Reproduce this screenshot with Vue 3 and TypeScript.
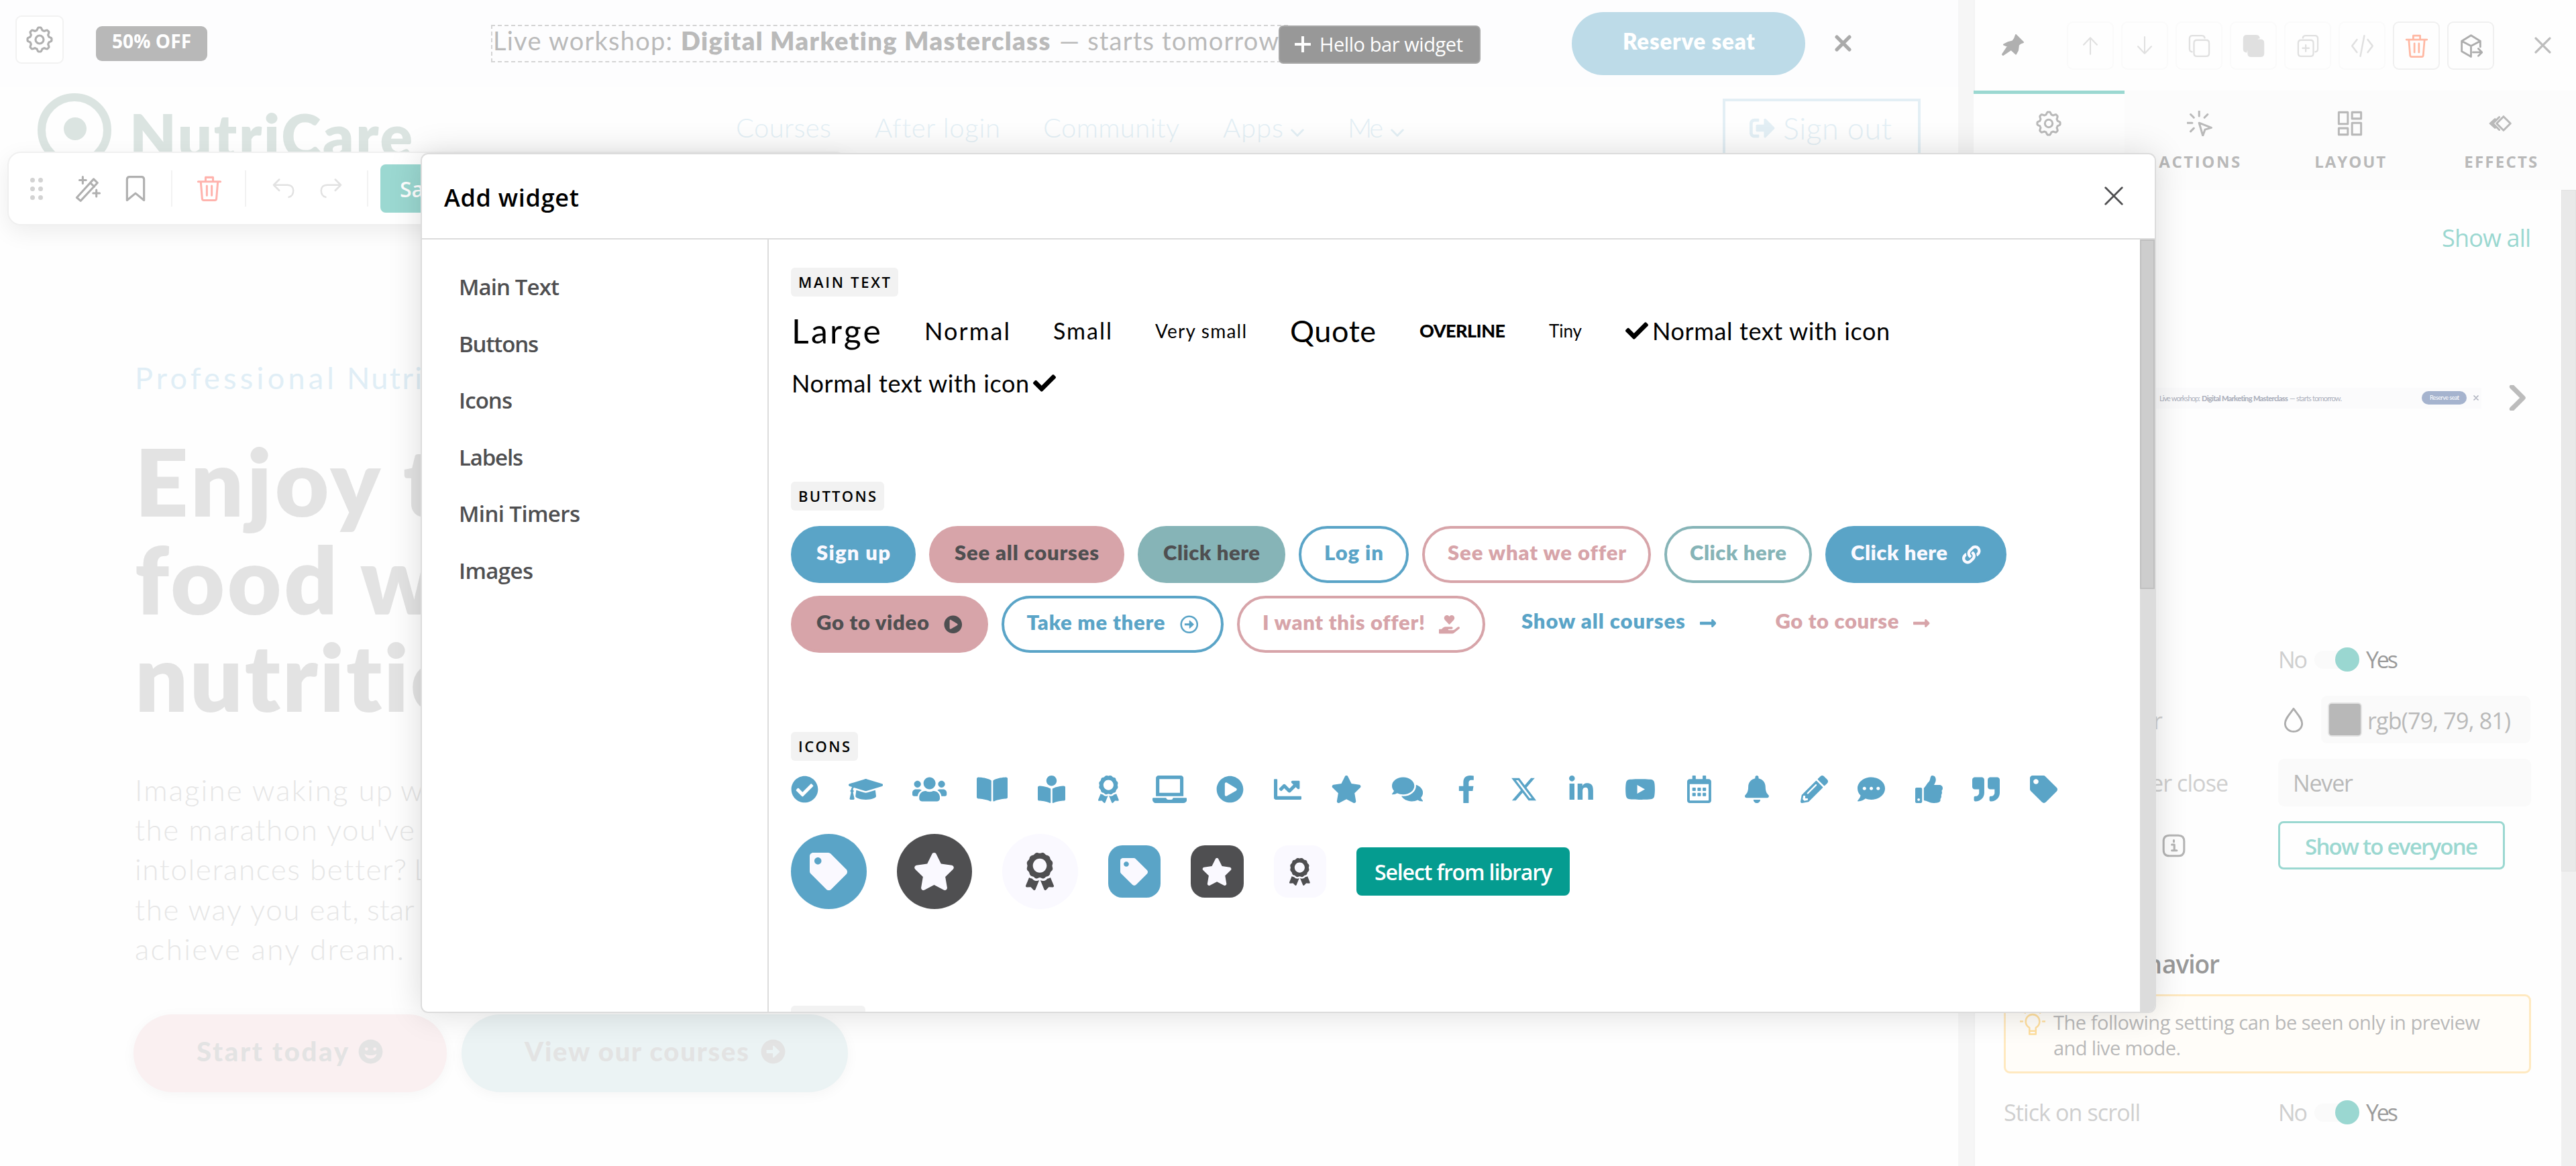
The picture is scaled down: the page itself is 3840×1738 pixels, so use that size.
<script setup lang="ts">
import { h } from 'vue'
import type { Directive } from 'vue'

// Tracks a run of text so that it fills the given measure in pixels.
const vFit: Directive<HTMLElement, number> = {
  mounted(el, binding) {
    const natural = el.getBoundingClientRect().width
    const count = Math.max((el.textContent ?? '').trim().length - 1, 1)
    el.style.letterSpacing = `${((binding.value - natural) / count).toFixed(3)}px`
    el.style.width = `${binding.value}px`
  },
}

function cogPath(): string {
  const pts: string[] = []
  for (let i = 0; i < 160; i++) {
    const a = (i / 160) * Math.PI * 2
    const wave = Math.max(-1, Math.min(1, Math.cos(a * 8) * 1.5))
    const r = 9.7 + wave * 1.1
    pts.push(`${(12 + r * Math.sin(a)).toFixed(2)} ${(12 - r * Math.cos(a)).toFixed(2)}`)
  }
  return `M${pts.join('L')}z M12 8.4a3.6 3.6 0 1 0 0 7.2a3.6 3.6 0 1 0 0-7.2z`
}

const disc = 'M256 8C119 8 8 119 8 256s111 248 248 248 248-111 248-248S393 8 256 8z'

// Solid glyphs on a 512-high grid: [grid width, path]
const solid: Record<string, [number, string]> = {
  checkCircle: [512, 'M504 256c0 136.967-111.033 248-248 248S8 392.967 8 256 119.033 8 256 8s248 111.033 248 248zM227.314 387.314l184-184c6.248-6.248 6.248-16.379 0-22.627l-22.627-22.627c-6.248-6.249-16.379-6.249-22.628 0L216 308.118l-70.059-70.059c-6.248-6.248-16.379-6.248-22.628 0l-22.627 22.627c-6.248 6.248-6.248 16.379 0 22.627l104 104c6.249 6.249 16.379 6.249 22.628.001z'],
  cap: [640, 'M622.34 153.2L343.4 67.5c-15.2-4.67-31.6-4.67-46.79 0L17.66 153.2c-23.54 7.23-23.54 38.36 0 45.59l48.63 14.94c-10.67 13.19-17.23 29.28-17.88 46.9C38.78 266.15 32 276.11 32 288c0 10.78 5.68 19.85 13.86 25.65L20.33 428.53C18.11 438.52 25.71 448 35.94 448h56.11c10.24 0 17.84-9.48 15.62-19.47L82.14 313.65C90.32 307.85 96 298.78 96 288c0-11.57-6.47-21.25-15.66-26.87.76-15.02 8.44-28.3 20.69-36.72L296.6 284.5c9.06 2.78 26.44 6.25 46.79 0l278.95-85.7c23.55-7.24 23.55-38.36 0-45.6zM352.79 315.09c-28.53 8.76-52.84 3.92-65.59 0l-145.02-44.55L128 384c0 35.35 85.96 64 192 64s192-28.65 192-64l-14.18-113.47-145.03 44.56z'],
  users: [640, 'M96 224c35.3 0 64-28.7 64-64s-28.7-64-64-64-64 28.7-64 64 28.7 64 64 64zm448 0c35.3 0 64-28.7 64-64s-28.7-64-64-64-64 28.7-64 64 28.7 64 64 64zm32 32h-64c-17.6 0-33.5 7.1-45.1 18.6 40.3 22.1 68.9 62 75.1 109.4h66c17.7 0 32-14.3 32-32v-32c0-35.3-28.7-64-64-64zm-256 0c61.9 0 112-50.1 112-112S381.9 32 320 32 208 82.1 208 144s50.1 112 112 112zm76.8 32h-8.3c-20.8 10-43.9 16-68.5 16s-47.6-6-68.5-16h-8.3C179.6 288 128 339.6 128 403.2V432c0 26.5 21.5 48 48 48h288c26.5 0 48-21.5 48-48v-28.8c0-63.6-51.6-115.2-115.2-115.2zm-223.7-13.4C161.5 263.1 145.6 256 128 256H64c-35.3 0-64 28.7-64 64v32c0 17.7 14.3 32 32 32h65.9c6.3-47.4 34.9-87.3 75.2-109.4z'],
  book: [576, 'M542.22 32.05c-54.8 3.11-163.72 14.43-230.96 55.59-4.64 2.84-7.27 7.89-7.27 13.17v363.87c0 11.55 12.63 18.85 23.28 13.49 69.18-34.82 169.23-44.32 218.7-46.92 16.89-.89 30.02-14.43 30.02-30.66V62.75c.01-17.71-15.35-31.74-33.77-30.7zM264.73 87.64C197.5 46.48 88.58 35.17 33.78 32.05 15.36 31.01 0 45.04 0 62.75V400.6c0 16.24 13.13 29.78 30.02 30.66 49.49 2.6 149.59 12.11 218.77 46.95 10.62 5.35 23.21-1.94 23.21-13.46V100.63c0-5.29-2.62-10.14-7.27-12.99z'],
  reader: [512, 'M352 96c0-53.02-42.98-96-96-96s-96 42.98-96 96 42.98 96 96 96 96-42.98 96-96zM233.59 241.1c-59.33-36.32-155.43-46.3-203.79-49.05C13.55 191.13 0 203.51 0 219.14v222.8c0 14.33 11.59 26.28 26.49 27.05 43.66 2.29 131.99 10.68 193.04 41.43 9.37 4.72 20.48-1.71 20.48-11.87V252.56c-.01-4.67-2.32-8.95-6.42-11.46zm248.61-49.05c-48.35 2.74-144.46 12.73-203.78 49.05-4.1 2.51-6.41 6.96-6.41 11.63v245.79c0 10.19 11.14 16.63 20.54 11.9 61.04-30.72 149.32-39.11 192.97-41.4 14.9-.78 26.49-12.73 26.49-27.06V219.14c-.01-15.63-13.56-28.01-29.81-27.09z'],
  award: [384, 'M97.12 362.63c-8.69-8.69-4.16-6.24-25.12-11.85-9.51-2.55-17.87-7.45-25.43-13.32L1.2 448.7c-4.39 10.77 3.81 22.47 15.43 22.03l52.69-2.01L105.56 507c8 8.44 22.04 5.81 26.43-4.96l52.05-127.62c-10.84 6.04-22.87 9.58-35.31 9.58-19.5 0-37.82-7.59-51.61-21.37zM382.8 448.7l-45.37-111.24c-7.56 5.88-15.92 10.77-25.43 13.32-21.07 5.64-16.45 3.18-25.12 11.85-13.79 13.78-32.12 21.37-51.62 21.37-12.44 0-24.47-3.55-35.31-9.58L252 502.04c4.39 10.77 18.44 13.4 26.43 4.96l36.25-38.28 52.69 2.01c11.62.44 19.82-11.27 15.43-22.03zM263 340c15.28-15.55 17.03-14.21 38.79-20.14 13.89-3.79 24.75-14.84 28.47-28.98 7.48-28.4 5.54-24.97 25.95-45.75 10.17-10.35 14.14-25.44 10.42-39.58-7.47-28.38-7.48-24.42 0-52.83 3.72-14.14-.25-29.23-10.42-39.58-20.41-20.78-18.47-17.36-25.95-45.75-3.72-14.14-14.58-25.19-28.47-28.98-27.88-7.61-24.52-5.62-44.95-26.41-10.17-10.35-25-14.4-38.89-10.61-27.87 7.6-23.98 7.61-51.9 0-13.89-3.79-28.72.25-38.89 10.61-20.41 20.78-17.05 18.8-44.94 26.41-13.89 3.79-24.75 14.84-28.47 28.98-7.47 28.39-5.54 24.97-25.95 45.75-10.17 10.35-14.15 25.44-10.42 39.58 7.47 28.36 7.48 24.4 0 52.82-3.72 14.14.25 29.23 10.42 39.59 20.41 20.78 18.47 17.35 25.95 45.75 3.72 14.14 14.58 25.19 28.47 28.98C104.6 325.96 106.27 325 121 340c13.23 13.47 33.84 15.88 49.74 5.82a39.676 39.676 0 0 1 42.53 0c15.89 10.06 36.5 7.65 49.73-5.82zM97.66 175.96c0-53.03 42.24-96.02 94.34-96.02s94.34 42.99 94.34 96.02-42.24 96.02-94.34 96.02-94.34-42.99-94.34-96.02z'],
  laptop: [640, 'M624 416H381.54c-.74 19.81-14.71 32-32.74 32H288c-18.69 0-33.02-17.47-32.77-32H16c-8.8 0-16 7.2-16 16v16c0 35.2 28.8 64 64 64h512c35.2 0 64-28.8 64-64v-16c0-8.8-7.2-16-16-16zM576 48c0-26.4-21.6-48-48-48H112C85.6 0 64 21.6 64 48v336h512V48zm-64 272H128V64h384v256z'],
  play: [512, disc + 'M371.7 280l-176 101c-15.8 8.8-35.7-2.5-35.7-21V152c0-18.4 19.8-29.8 35.7-21l176 107c16.4 9.2 16.4 32.9 0 42z'],
  chart: [512, 'M496 384H64V80c0-8.84-7.16-16-16-16H16C7.16 64 0 71.16 0 80v336c0 17.67 14.33 32 32 32h464c8.84 0 16-7.16 16-16v-32c0-8.84-7.16-16-16-16zM464 96H345.94c-21.38 0-32.09 25.85-16.97 40.97l32.4 32.4L288 242.75l-73.37-73.37c-12.5-12.5-32.76-12.5-45.25 0l-68.69 68.69c-6.25 6.25-6.25 16.38 0 22.63l22.62 22.62c6.25 6.25 16.38 6.25 22.63 0L192 237.25l73.37 73.37c12.5 12.5 32.76 12.5 45.25 0l96-96 32.4 32.4c15.12 15.12 40.97 4.41 40.97-16.97V112c.01-8.84-7.15-16-15.99-16z'],
  star: [576, 'M259.3 17.8L194 150.2 47.9 171.5c-26.2 3.8-36.7 36.1-17.7 54.6l105.7 103-25 145.5c-4.5 26.3 23.2 46 46.4 33.7L288 439.6l130.7 68.7c23.2 12.2 50.9-7.4 46.4-33.7l-25-145.5 105.7-103c19-18.5 8.5-50.8-17.7-54.6L382 150.2 316.7 17.8c-11.7-23.6-45.6-23.9-57.4 0z'],
  comments: [576, 'M416 192c0-88.4-93.1-160-208-160S0 103.6 0 192c0 34.3 14.1 65.9 38 92-13.4 30.2-35.5 54.2-35.8 54.5-2.2 2.3-2.8 5.7-1.5 8.7S4.8 352 8 352c36.6 0 66.9-12.3 88.7-25 32.2 15.7 70.3 25 111.3 25 114.9 0 208-71.6 208-160zm122 220c23.9-26 38-57.7 38-92 0-66.9-53.5-124.2-129.3-148.1.9 6.6 1.3 13.3 1.3 20.1 0 105.9-107.7 192-240 192-10.8 0-21.3-.8-31.7-1.9C207.8 439.6 281.8 480 368 480c41 0 79.1-9.2 111.3-25 21.8 12.7 52.1 25 88.7 25 3.2 0 6.1-1.9 7.3-4.8 1.3-2.9.7-6.3-1.5-8.7-.3-.3-22.4-24.2-35.8-54.5z'],
  facebook: [320, 'M279.14 288l14.22-92.66h-88.91v-60.13c0-25.35 12.42-50.06 52.24-50.06h40.42V6.26S260.43 0 225.36 0c-73.22 0-121.08 44.38-121.08 124.72v70.62H22.89V288h81.39v224h100.17V288z'],
  x: [512, 'M389.2 48h70.6L305.6 224.2 487 464H345L233.7 318.6 106.5 464H35.8L200.7 275.5 26.8 48H172.4L272.9 180.9 389.2 48zM364.4 421.8h39.1L151.1 88h-42L364.4 421.8z'],
  linkedin: [448, 'M100.28 448H7.4V148.9h92.88zM53.79 108.1C24.09 108.1 0 83.5 0 53.8a53.79 53.79 0 0 1 107.58 0c0 29.7-24.1 54.3-53.79 54.3zM447.9 448h-92.68V302.4c0-34.7-.7-79.2-48.29-79.2-48.29 0-55.69 37.7-55.69 76.7V448h-92.78V148.9h89.08v40.8h1.3c12.4-23.5 42.69-48.3 87.88-48.3 94 0 111.28 61.9 111.28 142.3V448z'],
  youtube: [576, 'M549.655 124.083c-6.281-23.65-24.787-42.276-48.284-48.597C458.781 64 288 64 288 64S117.22 64 74.629 75.486c-23.497 6.322-42.003 24.947-48.284 48.597-11.412 42.867-11.412 132.305-11.412 132.305s0 89.438 11.412 132.305c6.281 23.65 24.787 41.5 48.284 47.821C117.22 448 288 448 288 448s170.78 0 213.371-11.486c23.497-6.321 42.003-24.171 48.284-47.821 11.412-42.867 11.412-132.305 11.412-132.305s0-89.438-11.412-132.305zm-317.51 213.508V175.185l142.739 81.205-142.739 81.201z'],
  calendar: [448, 'M148 288h-40c-6.6 0-12-5.4-12-12v-40c0-6.6 5.4-12 12-12h40c6.6 0 12 5.4 12 12v40c0 6.6-5.4 12-12 12zm108-12v-40c0-6.6-5.4-12-12-12h-40c-6.6 0-12 5.4-12 12v40c0 6.6 5.4 12 12 12h40c6.6 0 12-5.4 12-12zm96 0v-40c0-6.6-5.4-12-12-12h-40c-6.6 0-12 5.4-12 12v40c0 6.6 5.4 12 12 12h40c6.6 0 12-5.4 12-12zm-96 96v-40c0-6.6-5.4-12-12-12h-40c-6.6 0-12 5.4-12 12v40c0 6.6 5.4 12 12 12h40c6.6 0 12-5.4 12-12zm-96 0v-40c0-6.6-5.4-12-12-12h-40c-6.6 0-12 5.4-12 12v40c0 6.6 5.4 12 12 12h40c6.6 0 12-5.4 12-12zm192 0v-40c0-6.6-5.4-12-12-12h-40c-6.6 0-12 5.4-12 12v40c0 6.6 5.4 12 12 12h40c6.6 0 12-5.4 12-12zm96-260v352c0 26.5-21.5 48-48 48H48c-26.5 0-48-21.5-48-48V112c0-26.5 21.5-48 48-48h48V12c0-6.6 5.4-12 12-12h40c6.6 0 12 5.4 12 12v52h128V12c0-6.6 5.4-12 12-12h40c6.6 0 12 5.4 12 12v52h48c26.5 0 48 21.5 48 48zm-48 346V160H48v298c0 3.3 2.7 6 6 6h340c3.3 0 6-2.7 6-6z'],
  bell: [448, 'M224 512c35.32 0 63.97-28.65 63.97-64H160.03c0 35.35 28.65 64 63.97 64zm215.39-149.71c-19.32-20.76-55.47-51.99-55.47-154.29 0-77.7-54.48-139.9-127.94-155.16V32c0-17.67-14.32-32-31.98-32s-31.98 14.33-31.98 32v20.84C118.56 68.1 64.08 130.3 64.08 208c0 102.3-36.15 133.53-55.47 154.29-6 6.45-8.66 14.16-8.61 21.71.11 16.4 12.98 32 32.1 32h383.8c19.12 0 32-15.6 32.1-32 .05-7.55-2.61-15.27-8.61-21.71z'],
  pencil: [512, 'M497.9 142.1l-46.1 46.1c-4.7 4.7-12.3 4.7-17 0l-111-111c-4.7-4.7-4.7-12.3 0-17l46.1-46.1c18.7-18.7 49.1-18.7 67.9 0l60.1 60.1c18.8 18.7 18.8 49.1 0 67.9zM284.2 99.8L21.6 362.4.4 483.9c-2.9 16.4 11.4 30.6 27.8 27.8l121.5-21.3 262.6-262.6c4.7-4.7 4.7-12.3 0-17l-111-111c-4.8-4.7-12.4-4.7-17.1 0zM124.1 339.9c-5.5-5.5-5.5-14.3 0-19.8l154-154c5.5-5.5 14.3-5.5 19.8 0s5.5 14.3 0 19.8l-154 154c-5.5 5.5-14.3 5.5-19.8 0zM88 424h48v36.3l-64.5 11.3-31.1-31.1L51.7 376H88v48z'],
  comment: [512, 'M256 32C114.6 32 0 125.1 0 240c0 49.6 21.4 95 57 130.7C44.5 421.1 2.7 466 2.2 466.5c-2.2 2.3-2.8 5.7-1.5 8.7S4.8 480 8 480c66.3 0 116-31.8 140.6-51.4 32.7 12.3 69 19.4 107.4 19.4 141.4 0 256-93.1 256-208S397.4 32 256 32zM128 272c-17.7 0-32-14.3-32-32s14.3-32 32-32 32 14.3 32 32-14.3 32-32 32zm128 0c-17.7 0-32-14.3-32-32s14.3-32 32-32 32 14.3 32 32-14.3 32-32 32zm128 0c-17.7 0-32-14.3-32-32s14.3-32 32-32 32 14.3 32 32-14.3 32-32 32z'],
  thumb: [512, 'M104 224H24c-13.255 0-24 10.745-24 24v240c0 13.255 10.745 24 24 24h80c13.255 0 24-10.745 24-24V248c0-13.255-10.745-24-24-24zM64 472c-13.255 0-24-10.745-24-24s10.745-24 24-24 24 10.745 24 24-10.745 24-24 24zM384 81.452c0 42.416-25.97 66.208-33.277 94.548h101.723c33.397 0 59.397 27.746 59.553 58.098.084 17.938-7.546 37.249-19.439 49.197l-.11.11c9.836 23.337 8.237 56.037-9.308 79.469 8.681 25.895-.069 57.704-16.382 74.757 4.298 17.598 2.244 32.575-6.148 44.632C440.202 511.587 389.616 512 346.839 512l-2.845-.001c-48.287-.017-87.806-17.598-119.56-31.725-15.957-7.099-36.821-15.887-52.651-16.178-6.54-.12-11.783-5.457-11.783-11.998v-213.77c0-3.2 1.282-6.271 3.558-8.521 39.614-39.144 56.648-80.587 89.117-113.111 14.804-14.832 20.188-37.236 25.393-58.902C282.515 39.293 291.817 0 312 0c24 0 72 8 72 81.452z'],
  quote: [512, 'M464 32H336c-26.5 0-48 21.5-48 48v128c0 26.5 21.5 48 48 48h80v64c0 35.3-28.7 64-64 64h-8c-13.3 0-24 10.7-24 24v48c0 13.3 10.7 24 24 24h8c88.4 0 160-71.6 160-160V80c0-26.5-21.5-48-48-48zm-288 0H48C21.5 32 0 53.5 0 80v128c0 26.5 21.5 48 48 48h80v64c0 35.3-28.7 64-64 64h-8c-13.3 0-24 10.7-24 24v48c0 13.3 10.7 24 24 24h8c88.4 0 160-71.6 160-160V80c0-26.5-21.5-48-48-48z'],
  tag: [512, 'M0 252.118V48C0 21.49 21.49 0 48 0h204.118a48 48 0 0 1 33.941 14.059l211.882 211.882c18.745 18.745 18.745 49.137 0 67.882L293.823 497.941c-18.745 18.745-49.137 18.745-67.882 0L14.059 286.059A48 48 0 0 1 0 252.118zM112 64c-26.51 0-48 21.49-48 48s21.49 48 48 48 48-21.49 48-48-21.49-48-48-48z'],
  link: [512, 'M326.612 185.391c59.747 59.809 58.927 155.698.36 214.59-.11.12-.24.25-.36.37l-67.2 67.2c-59.27 59.27-155.699 59.262-214.96 0-59.27-59.26-59.27-155.7 0-214.96l37.106-37.106c9.84-9.84 26.786-3.3 27.294 10.606.648 17.722 3.826 35.527 9.69 52.721 1.986 5.822.567 12.262-3.783 16.612l-13.087 13.087c-28.026 28.026-28.905 73.66-1.155 101.96 28.024 28.579 74.086 28.749 102.325.51l67.2-67.19c28.191-28.191 28.073-73.757 0-101.83-3.701-3.694-7.429-6.564-10.341-8.569a16.037 16.037 0 0 1-6.947-12.606c-.396-10.567 3.348-21.456 11.698-29.806l21.054-21.055c5.521-5.521 14.182-6.199 20.584-1.731a152.482 152.482 0 0 1 20.522 17.197zM467.547 44.449c-59.261-59.262-155.69-59.27-214.96 0l-67.2 67.2c-.12.12-.25.25-.36.37-58.566 58.892-59.387 154.781.36 214.59a152.454 152.454 0 0 0 20.521 17.196c6.402 4.468 15.064 3.789 20.584-1.731l21.054-21.055c8.35-8.35 12.094-19.239 11.698-29.806a16.037 16.037 0 0 0-6.947-12.606c-2.912-2.005-6.64-4.875-10.341-8.569-28.073-28.073-28.191-73.639 0-101.83l67.2-67.19c28.239-28.239 74.3-28.069 102.325.51 27.75 28.3 26.872 73.934-1.155 101.96l-13.087 13.087c-4.35 4.35-5.769 10.79-3.783 16.612 5.864 17.194 9.042 34.999 9.69 52.721.509 13.906 17.454 20.446 27.294 10.606l37.106-37.106c59.271-59.259 59.271-155.699.001-214.959z'],
  check: [512, 'M173.898 439.404l-166.4-166.4c-9.997-9.997-9.997-26.206 0-36.204l36.203-36.204c9.997-9.998 26.207-9.998 36.204 0L192 312.69 432.095 72.596c9.997-9.997 26.207-9.997 36.204 0l36.203 36.204c9.997 9.997 9.997 26.206 0 36.204l-294.4 294.401c-9.998 9.997-26.207 9.997-36.204-.001z'],
  arrow: [448, 'M313.941 216H12c-6.627 0-12 5.373-12 12v56c0 6.627 5.373 12 12 12h301.941v46.059c0 21.382 25.851 32.09 40.971 16.971l86.059-86.059c9.373-9.373 9.373-24.569 0-33.941l-86.059-86.059c-15.119-15.119-40.971-4.411-40.971 16.971V216z'],
  ringArrow: [512, disc + 'M256 56c110.500 0 200 89.500 200 200s-89.500 200-200 200S56 366.500 56 256 145.500 56 256 56zM128 226h128v-66c0-12 14-18 22-10l104 96c6 6 6 15 0 21l-104 96c-8 8-22 2-22-10v-67H128z'],
  discArrow: [512, disc + 'M120 222h130v-74c0-13 16-20 25-10l110 106c7 7 7 18 0 25L275 375c-9 9-25 3-25-10v-74H120z'],
  smile: [512, disc + 'M170 168a34 34 0 1 0 .1 0zM342 168a34 34 0 1 0 .1 0zM130 300c20 70 70 100 126 100s106-30 126-100c-40 24-80 32-126 32s-86-8-126-32z'],
  heartHand: [576, 'M275.3 250.500c7 7.400 18.400 7.400 25.500 0l108.900-114.200c31.600-33.200 29.800-88.200-5.600-118.800-30.800-26.700-76.700-21.900-104.900 7.700L288 36.900l-11.100-11.600C248.700-4.400 202.800-9.200 172 17.500c-35.300 30.600-37.200 85.600-5.600 118.800l108.900 114.200zM565.300 328.100c-11.800-10.700-30.200-10-42.600 0L430.300 402c-11.300 9.100-25.400 14-40 14H272c-8.800 0-16-7.200-16-16s7.200-16 16-16h78.300c15.900 0 30.700-10.900 33.300-26.600 3.300-20-12.100-37.400-31.600-37.400H192c-27 0-53.100 9.300-74.100 26.300L71.400 384H16c-8.800 0-16 7.200-16 16v96c0 8.800 7.200 16 16 16h356.800c14.500 0 28.600-4.900 40-14L564 377c15.200-12.100 16.400-35.300 1.300-48.900z'],
  signOut: [512, 'M497 273L329 441c-15 15-41 4.500-41-17v-96H152c-13.300 0-24-10.700-24-24v-96c0-13.300 10.700-24 24-24h136V88c0-21.400 25.900-32 41-17l168 168c9.300 9.400 9.300 24.600 0 34zM192 436v-40c0-6.600-5.400-12-12-12H96c-17.700 0-32-14.300-32-32V160c0-17.700 14.300-32 32-32h84c6.600 0 12-5.400 12-12V76c0-6.600-5.400-12-12-12H96c-53 0-96 43-96 96v192c0 53 43 96 96 96h84c6.600 0 12-5.400 12-12z'],
}

// Outline glyphs on a 24 grid: [stroke width, path]
const outline: Record<string, [number, string]> = {
  cog: [1.9, cogPath()],
  close: [3.2, 'M2 2L22 22M22 2L2 22'],
  closeThin: [2.4, 'M1.500 1.500L22.500 22.500M22.500 1.500L1.500 22.500'],
  closeHeavy: [5, 'M3 3L21 21M21 3L3 21'],
  wand: [1.9, 'M1.500 20L17 3l3.500 3.500L5 23zM14 6.500l3.500 3.500M7 1v6M4 4h6M19.500 13v6M16.500 16h6'],
  bookmark: [2, 'M4 23V3.500Q4 1 6.500 1h11Q20 1 20 3.500V23l-8-6.500z'],
  trash: [1.9, 'M1.500 5.500h21M8.500 5V1.500h7V5M4 6l1.300 15.500q.1 1.500 1.500 1.500h10.400q1.400 0 1.500-1.500L20 6M9.700 9.500v9M14.300 9.500v9'],
  undo: [1.7, 'M7.500 3L2 8.500l5.500 5.500M2 8.500h13.500c4 0 6 2.500 6 5.500s-1.500 6-4.500 6.500'],
  redo: [1.7, 'M16.500 3L22 8.500l-5.500 5.500M22 8.500H8.500c-4 0-6 2.500-6 5.500s1.500 6 4.500 6.500'],
  up: [1.8, 'M12 23V2M3.500 11L12 2l8.500 9'],
  down: [1.8, 'M12 1v21M3.500 13l8.500 9 8.500-9'],
  copy: [1.6, 'M9.500 6H19q3 0 3 3v10.500q0 3-3 3H9.500q-3 0-3-3V9q0-3 3-3zM4.500 18Q2 17.500 2 15V4.500Q2 1.500 5 1.500h9.500q2.500 0 3 2.200'],
  copyPlus: [1.6, 'M5 6h9.500q3 0 3 3v10.500q0 3-3 3H5q-3 0-3-3V9q0-3 3-3zM19.500 18q2.500-.5 2.500-3V4.500q0-3-3-3H9.500Q7.200 1.500 6.700 3.700M9.700 11v6.500M6.500 14.200H13'],
  code: [1.7, 'M6.500 5.500L1.500 12l5 6.500M17.500 5.500l5 6.500-5 6.500M14 1.500l-4 21'],
  cube: [1.9, 'M21.500 13V7L12 1.200 2.500 7v10.500L12 23V12M2.500 7L12 12l9.500-5M14 18.500h9M19.500 14.800l3.700 3.700-3.700 3.700'],
  cursor: [1.900, 'M11.500 11.500l11.500 4.500-6 1.800-2 5.700zM11.500.5v4.500M3.500 3.500l3 3M19.500 3.500l-3 3M.5 11.500H5M3.500 19.500l3-3'],
  grid: [1.900, 'M1.500 1.500h8.500v11H1.500zM14 1.500h8.500v6H14zM1.500 16.500h8.500v6H1.500zM14 11.500h8.500v11H14z'],
  effects: [1.900, 'M14.500 5.500l6.500 6.500-6.500 6.500L8 12zM10.500 6L4.500 12l6 6M6.500 8L2 12l4.500 4'],
  drop: [1.800, 'M12 1.500c3.500 5 8 9.200 8 14a8 7.500 0 0 1-16 0c0-4.800 4.500-9 8-14z'],
  info: [2.100, 'M7.500 1.500h9q6 0 6 6v9q0 6-6 6h-9q-6 0-6-6v-9q0-6 6-6zM10 11h2.500v6M10 17h5M12 6.500v1.500'],
  bulb: [1.600, 'M9 20v-3Q5.500 15 5.500 11a6.500 6.500 0 0 1 13 0q0 4-3.500 6v3zM9 20v3h6v-3M12 1V2M2.500 11h-2M23.500 11h-2M5 3L4 2M19 3l1-1'],
  chevRight: [4.500, 'M6 1.500L16.500 12 6 22.500'],
  chevDown: [3.500, 'M2 7l10 10L22 7'],
  plus: [4, 'M12 1v22M1 12h22'],
}

const Glyph = (p: { name: string; size: number }) =>
  h('svg', { viewBox: `0 0 ${solid[p.name][0]} 512`, height: p.size, width: (p.size * solid[p.name][0]) / 512, fill: 'currentColor', 'fill-rule': 'evenodd' }, [h('path', { d: solid[p.name][1] })])
Glyph.props = ['name', 'size']

const Line = (p: { name: string; size: number }) =>
  h('svg', { viewBox: '0 0 24 24', height: p.size, width: p.size, fill: 'none', stroke: 'currentColor', 'stroke-width': outline[p.name][0], 'stroke-linecap': 'round', 'stroke-linejoin': 'round' }, [h('path', { d: outline[p.name][1] })])
Line.props = ['name', 'size']

const headline: [string, number, string][] = [['Enjoy', 366, 't'], ['food', 302, 'w'], ['nutritio', 494, '']]
const story: [string, number, string][] = [
  ['Imagine waking up', 384, 'w'],
  ["the marathon you've", 417, ''],
  ['intolerances better?', 404, 'L'],
  ['the way you eat,', 334, 'star'],
  ['achieve any dream.', 401, ''],
]
const categories: [string, number][] = [['Main Text', 150], ['Buttons', 119], ['Icons', 80], ['Labels', 96], ['Mini Timers', 181], ['Images', 111]]
const filled: { label: string; w: number; kind: string; icon?: string }[][] = [
  [
    { label: 'Sign up', w: 110, kind: 'blue' },
    { label: 'See all courses', w: 215, kind: 'pink' },
    { label: 'Click here', w: 144, kind: 'teal' },
    { label: 'Log in', w: 88, kind: 'blue-line' },
    { label: 'See what we offer', w: 265, kind: 'pink-line' },
    { label: 'Click here', w: 144, kind: 'teal-line' },
    { label: 'Click here', w: 144, kind: 'blue', icon: 'link' },
  ],
  [
    { label: 'Go to video', w: 168, kind: 'pink', icon: 'play' },
    { label: 'Take me there', w: 206, kind: 'blue-line', icon: 'ringArrow' },
    { label: 'I want this offer!', w: 241, kind: 'pink-line', icon: 'heartHand' },
  ],
]
const iconRow = ['checkCircle', 'cap', 'users', 'book', 'reader', 'award', 'laptop', 'play', 'chart', 'star', 'comments', 'facebook', 'x', 'linkedin', 'youtube', 'calendar', 'bell', 'pencil', 'comment', 'thumb', 'quote', 'tag']
const tiles = [
  { icon: 'tag', kind: 'round blue-tile', size: 56 },
  { icon: 'star', kind: 'round dark-tile', size: 56 },
  { icon: 'award', kind: 'round pale-tile', size: 56 },
  { icon: 'tag', kind: 'square blue-tile', size: 41 },
  { icon: 'star', kind: 'square dark-tile', size: 41 },
  { icon: 'award', kind: 'square pale-tile', size: 41 },
]
const tools = ['up', 'down', 'copy', 'copy', 'copyPlus', 'code', 'trash', 'cube']
const tabs: [string, string, number][] = [['cog', '', 0], ['cursor', 'ACTIONS', 121], ['grid', 'LAYOUT', 106], ['effects', 'EFFECTS', 109]]
</script>

<template>
  <div class="app">
    <main class="canvas">
      <div class="hello">
        <div class="hello-gear"><Line name="cog" :size="40" /></div>
        <div class="badge"><span v-fit="118" class="t">50% OFF</span></div>
        <div class="message geo">
          <span v-fit="267" class="t">Live workshop:</span>
          <b v-fit="551" class="t">Digital Marketing Masterclass</b>
          <span v-fit="327" class="t">— starts tomorrow</span>
        </div>
        <div class="chip"><Line name="plus" :size="24" /><span v-fit="214" class="t">Hello bar widget</span></div>
        <div class="reserve geo"><span v-fit="197" class="t">Reserve seat</span></div>
        <Line class="hello-x" name="closeHeavy" :size="25" />
      </div>
      <header class="site-header geo">
        <svg class="logo" viewBox="0 0 110 110"><circle cx="55" cy="55" r="49" /><circle class="dot" cx="56" cy="53" r="17" /></svg>
        <span v-fit="422" class="t brand">NutriCare</span>
        <nav class="nav">
          <span v-fit="142" class="t">Courses</span>
          <span v-fit="186" class="t">After login</span>
          <span v-fit="203" class="t">Community</span>
          <span class="drop-link"><span v-fit="90" class="t">Apps</span><Line name="chevDown" :size="20" /></span>
          <span class="drop-link"><span v-fit="53" class="t">Me</span><Line name="chevDown" :size="20" /></span>
        </nav>
        <div class="sign-out"><Glyph name="signOut" :size="38" /><span v-fit="162" class="t">Sign out</span></div>
      </header>
      <section class="hero geo">
        <div class="kicker"><span v-fit="297" class="t">Professional</span><span v-fit="112" class="t">Nutri</span></div>
        <h1>
          <span v-for="[a, w, b] in headline" :key="a" class="h-line"><span v-fit="w" class="t">{{ a }}</span><span v-if="b">{{ b }}</span></span>
        </h1>
        <p>
          <span v-for="[a, w, b] in story" :key="a" class="p-line"><span v-fit="w" class="t">{{ a }}</span><span v-if="b">{{ b }}</span></span>
        </p>
        <div class="ctas">
          <div class="cta rose"><span v-fit="226" class="t">Start today</span><Glyph name="smile" :size="37" /></div>
          <div class="cta mint"><span v-fit="334" class="t">View our courses</span><Glyph name="discArrow" :size="37" /></div>
        </div>
      </section>
    </main>

    <div class="canvas-track"></div>

    <aside class="panel">
      <div class="panel-head">
        <svg class="pin" viewBox="0 0 33 32"><path d="M21 1L32 12l-4 1.500-3 2.500-1 8-3 5.500L14 23 2 31 1 30l8-12-6-2.500 7-3.500 6-1.500 3-4z" /></svg>
        <div class="tools">
          <div v-for="(t, i) in tools" :key="i" class="tool" :class="{ live: i > 5, danger: i === 6, solid: i === 3 }"><Line :name="t" :size="i === 0 || i === 1 ? 28 : 35" /></div>
        </div>
        <Line class="panel-x" name="close" :size="25" />
      </div>
      <div class="tabs">
        <div v-for="([icon, label, w], i) in tabs" :key="icon" class="tab" :class="{ active: i === 0 }">
          <Line :name="icon" :size="38" /><span v-if="label" v-fit="w" class="t">{{ label }}</span>
        </div>
      </div>
      <div class="panel-body">
        <div class="settings">
          <div class="show-all"><span v-fit="133" class="t">Show all</span></div>
          <div class="slider">
            <div class="thumb-bar geo">
              <span v-fit="61" class="t">Live workshop:</span><b v-fit="129" class="t">Digital Marketing Masterclass</b><span v-fit="78" class="t">— starts tomorrow.</span>
              <span class="thumb-btn"><span v-fit="44" class="t">Reserve seat</span></span><Line name="closeHeavy" :size="8" />
            </div>
            <Line class="slide-next" name="chevRight" :size="38" />
          </div>
          <div class="field first"><span class="name"></span><span v-fit="44" class="t no">No</span><span class="switch"><i></i></span><span v-fit="48" class="t yes">Yes</span></div>
          <div class="field color">
            <span class="name"><span v-fit="237" class="t">Close icon color</span></span>
            <Line class="drop" name="drop" :size="38" />
            <div class="input swatch-input"><i class="swatch"></i><span v-fit="214" class="t">rgb(79, 79, 81)</span></div>
          </div>
          <div class="field never"><span class="name"><span v-fit="335" class="t">Show again after close</span></span><div class="input"><span v-fit="90" class="t">Never</span></div></div>
          <div class="field audience"><span class="name"><Line name="info" :size="35" /></span><div class="outline-btn"><span v-fit="258" class="t">Show to everyone</span></div></div>
          <h2><span v-fit="236" class="t">Display beh</span><span v-fit="86" class="t">avior</span></h2>
          <div class="notice">
            <Line name="bulb" :size="38" />
            <div><span v-fit="636" class="t">The following setting can be seen only in preview</span><span v-fit="190" class="t">and live mode.</span></div>
          </div>
          <div class="field stick"><span class="name"><span v-fit="204" class="t">Stick on scroll</span></span><span v-fit="44" class="t no">No</span><span class="switch"><i></i></span><span v-fit="48" class="t yes">Yes</span></div>
        </div>
        <div class="panel-scroll"><i></i></div>
      </div>
    </aside>

    <div class="toolbar">
      <div class="dots"><i v-for="n in 6" :key="n"></i></div>
      <Line class="wand" name="wand" :size="39" />
      <Line class="mark" name="bookmark" :size="38" />
      <i class="bar b1"></i>
      <Line class="bin" name="trash" :size="38" />
      <i class="bar b2"></i>
      <Line class="faint" name="undo" :size="36" />
      <Line class="faint redo" name="redo" :size="36" />
      <i class="bar b3"></i>
      <div class="save">Sa</div>
    </div>

    <div class="modal-shadow"></div>
    <div class="modal">
      <div class="modal-head">
        <span v-fit="201" class="t title">Add widget</span>
        <Line name="closeThin" :size="28" />
      </div>
      <div class="modal-body">
        <ul class="side">
          <li v-for="[c, w] in categories" :key="c"><span v-fit="w" class="t">{{ c }}</span></li>
        </ul>
        <div class="content">
          <span class="tag"><span v-fit="137" class="t">MAIN TEXT</span></span>
          <div class="texts geo">
            <span v-fit="133" class="t large">Large</span>
            <span v-fit="127" class="t">Normal</span>
            <span v-fit="87" class="t small">Small</span>
            <span v-fit="136" class="t very">Very small</span>
            <span v-fit="128" class="t quote">Quote</span>
            <b v-fit="128" class="t over">OVERLINE</b>
            <span v-fit="49" class="t tiny">Tiny</span>
            <span class="with-icon"><Glyph name="check" :size="34" /><span v-fit="354" class="t">Normal text with icon</span></span>
          </div>
          <div class="texts second geo">
            <span class="with-icon"><span v-fit="354" class="t">Normal text with icon</span><Glyph name="check" :size="34" /></span>
          </div>

          <span class="tag"><span v-fit="116" class="t">BUTTONS</span></span>
          <div class="btn-rows geo">
            <div v-for="(row, r) in filled" :key="r" class="btn-row">
              <div v-for="(b, i) in row" :key="i" class="btn" :class="b.kind">
                <span v-fit="b.w" class="t">{{ b.label }}</span><Glyph v-if="b.icon" :name="b.icon" :size="27.500" />
              </div>
              <template v-if="r === 1">
                <div class="btn plain blue-plain"><span v-fit="244" class="t">Show all courses</span><Glyph name="arrow" :size="28" /></div>
                <div class="btn plain pink-plain"><span v-fit="184" class="t">Go to course</span><Glyph name="arrow" :size="28" /></div>
              </template>
            </div>
          </div>

          <span class="tag"><span v-fit="77" class="t">ICONS</span></span>
          <div class="icon-row"><span v-for="n in iconRow" :key="n" class="icon-cell"><Glyph :name="n" :size="41" /></span></div>
          <div class="tile-row">
            <div v-for="(t, i) in tiles" :key="i" class="tile" :class="t.kind"><Glyph :name="t.icon" :size="t.size" /></div>
            <div class="library"><span v-fit="265" class="t">Select from library</span></div>
          </div>
          <span class="tag next-tag"></span>
        </div>
        <div class="modal-scroll"><i></i></div>
      </div>
    </div>
  </div>
</template>

<style>
body { margin: 0; background: #fefefe; }
</style>

<style scoped>
* { box-sizing: border-box; }
.app { position: relative; display: flex; width: 3840px; height: 1738px; overflow: hidden; background: #fefefe; font-family: "Open Sans", "Noto Sans", sans-serif; font-size: 34px; color: #4f4f51; }
.geo { font-family: Lato, "Open Sans", sans-serif; }
.t { display: inline-block; flex: none; white-space: nowrap; }
svg { display: block; flex: none; }
i { display: block; }

/* page canvas */
.canvas { width: 2919px; flex: none; }
.canvas-track { width: 23px; flex: none; background: #f6f6f6; }
.hello { display: flex; align-items: flex-start; height: 130px; background: #fdfdfe; }
.hello-gear { display: flex; align-items: center; justify-content: center; width: 72px; height: 72px; margin: 23px 0 0 23px; border: 2px solid #f2f2f2; border-radius: 9px; background: #fff; color: #b0b0b0; }
.badge { width: 166px; height: 52px; margin: 39px 0 0 48px; padding-left: 24px; border-radius: 9px; background: #b8b8b8; color: #fff; font-size: 28px; font-weight: 700; line-height: 45px; }
.message { display: flex; gap: 13px; width: 1188px; height: 56px; margin: 37px 0 0 423px; padding-left: 1px; border: 2px dashed #d4d4d4; color: #bababa; font-size: 38px; font-weight: 400; line-height: 43px; }
.message b { font-weight: 800; }
.chip { display: flex; align-items: center; gap: 13px; width: 301px; height: 57px; margin: 38px 0 0 -14px; padding: 0 0 2px 22px; border: 2px solid #a6a6a6; border-radius: 7px; background: #989898; color: #fff; font-size: 29px; }
.reserve { width: 348px; height: 94px; margin: 18px 0 0 136px; padding-left: 76px; border-radius: 47px; background: #bddbe8; color: #fff; font-size: 33px; font-weight: 800; line-height: 87px; }
.hello-x { margin: 52px 0 0 44px; color: #aaa; }
.site-header { display: flex; align-items: flex-start; height: 290px; color: #e3eff5; }
.logo { width: 110px; height: 110px; margin: 9px 0 0 56px; fill: none; stroke: #dbe4e1; stroke-width: 12; }
.logo .dot { fill: #dbe4e1; stroke: none; }
.brand { margin: 16px 0 0 27px; color: #dbe4e1; font-size: 90px; font-weight: 800; line-height: 110px; }
.nav { display: flex; gap: 65px; margin: 35px 0 0 482px; font-size: 40px; font-weight: 300; line-height: 51px; }
.drop-link { display: flex; align-items: center; gap: 11px; }
.drop-link svg { margin-top: 14px; }
.sign-out { display: flex; align-items: center; gap: 12px; width: 295px; height: 110px; margin: 17px 0 0 475px; padding: 0 0 23px 36px; border: 4px solid #e3eff5; font-size: 45px; font-weight: 300; }
.hero { padding: 113px 0 0 201px; }
.kicker { display: flex; gap: 19px; color: #e0eef6; font-size: 45px; font-weight: 400; line-height: 60px; }
h1 { margin: 51px 0 0; color: #e3e3e3; font-size: 139px; font-weight: 800; line-height: 145.5px; }
.h-line { display: flex; gap: 34px; width: 900px; white-space: nowrap; }
p { margin: 67px 0 0; color: #e6e6e6; font-size: 44px; font-weight: 300; line-height: 59.4px; }
.p-line { display: flex; gap: 12px; white-space: nowrap; }
.ctas { display: flex; gap: 22px; margin: 67px 0 0 -2px; }
.cta { display: flex; align-items: center; height: 116px; padding-bottom: 5px; border-radius: 58px; color: #e3e3e3; font-size: 40px; font-weight: 900; box-shadow: 0 4px 20px rgba(0, 0, 0, 0.04); }
.rose { width: 467px; gap: 15px; padding-left: 94px; background: #faf0f1; }
.mint { width: 576px; gap: 18px; padding-left: 94px; background: #ebf3f4; }

/* floating toolbar */
.toolbar { position: absolute; left: 11px; top: 226px; display: flex; align-items: center; width: 1254px; height: 110px; padding-left: 32px; border: 2px solid #f0f0f0; border-radius: 20px; background: #fff; box-shadow: 0 10px 34px rgba(0, 0, 0, 0.07); color: #b0b0b0; }
.dots { display: grid; grid-template-columns: 7px 7px; gap: 6px 5px; }
.dots i { width: 7px; height: 7px; border-radius: 50%; background: #d3d3d3; }
.wand { margin-left: 48px; }
.mark { margin-left: 32px; }
.bar { width: 2px; height: 54px; background: #f2f2f2; }
.b1 { margin-left: 34px; }
.bin { margin-left: 36px; color: #ffb3ad; }
.b2 { margin-left: 34px; }
.faint { margin-left: 38px; color: #e2e2e2; }
.redo { margin-left: 34px; }
.b3 { margin-left: 36px; }
.save { width: 150px; height: 72px; margin-left: 18px; padding-left: 29px; border-radius: 8px; background: #9bd8d1; color: #fff; font-size: 32px; font-weight: 600; line-height: 73px; }

/* settings panel */
.panel { display: flex; flex-direction: column; width: 898px; flex: none; background: #fefefe; box-shadow: inset 2px 0 0 #f3f3f3; }
.panel-head { display: flex; align-items: flex-start; height: 135px; flex: none; }
.pin { width: 33px; height: 32px; margin: 51px 0 0 42px; fill: #b0b0b0; stroke: #b0b0b0; stroke-width: 2; stroke-linejoin: round; }
.tools { display: flex; gap: 11px; margin: 32px 0 0 64px; }
.tool { display: flex; align-items: center; justify-content: center; width: 70px; height: 72px; border: 2px solid #fafafa; border-radius: 9px; color: #e0e0e0; }
.tool.live { border-color: #f0f0f0; color: #adadad; }
.tool.danger { color: #ffb8a3; }
.tool.solid svg { fill: #e0e0e0; }
.panel-x { margin: 55px 0 0 60px; color: #bdbdbd; }
.tabs { display: flex; height: 148px; flex: none; background: #fcfcfc; }
.tab { display: flex; flex-direction: column; align-items: center; gap: 20px; width: 224.500px; padding-top: 30px; color: #b9b9b9; font-size: 24px; font-weight: 700; line-height: 36px; }
.tab.active { padding-top: 25px; border-top: 5px solid #9bd8d1; background: #fefefe; }
.panel-body { display: flex; flex: 1; min-height: 0; }
.settings { width: 876px; padding: 47px 45px 0; }
.panel-scroll { width: 22px; background: #f0f0f0; }
.panel-scroll i { height: 1016px; background: #e9e9e9; box-shadow: inset 0 0 0 1px #e3e3e3; }
.show-all { display: flex; justify-content: flex-end; color: #9bd8d1; font-size: 36px; line-height: 50px; }
.slider { display: flex; align-items: center; height: 36px; margin-top: 195px; }
.thumb-bar { display: flex; align-items: center; gap: 2px; width: 718px; height: 31px; padding-left: 232px; background: #fbfbfc; color: #adb1bd; font-size: 11px; }
.thumb-bar b { font-weight: 900; }
.thumb-btn { width: 67px; height: 20px; margin: 0 8px 0 117px; padding-left: 12px; border-radius: 10px; background: #a5b3ce; color: #fff; font-size: 9px; line-height: 20px; }
.slide-next { margin-left: 36px; color: #bcbcbc; }
.field { display: flex; align-items: center; color: #b9b9b9; font-size: 34px; }
.name { display: flex; width: 409px; flex: none; color: #cfcfcf; }
.first { height: 70px; margin-top: 337px; }
.no { color: #cfcfcf; }
.yes { margin-left: 10px; color: #9b9b9b; }
.switch { display: flex; align-items: center; justify-content: flex-end; width: 67px; height: 27px; margin-left: 10px; border-radius: 14px; background: #fafafa; }
.switch i { width: 36px; height: 36px; border-radius: 50%; background: #9ad7d1; }
.color { height: 71px; margin-top: 19px; }
.color .t { margin-top: 3px; }
.drop { margin: 0 26px 0 4px; color: #adadad; }
.input { display: flex; align-items: center; width: 377px; height: 71px; padding-left: 22px; border-radius: 9px; background: #fafafa; }
.swatch-input { width: 312px; gap: 8px; padding-left: 10px; margin-left: -4px; }
.swatch { width: 51px; height: 51px; border: 2px solid #e3e3e3; border-radius: 6px; background: #b8b8b8; }
.never { height: 71px; margin-top: 23px; }
.audience { height: 72px; margin-top: 22px; }
.audience .name { padding-left: 236px; color: #b5b5b5; }
.outline-btn { width: 338px; height: 72px; padding: 0 0 0 37px; border: 3px solid #9bd8d1; border-radius: 8px; color: #9bd8d1; font-size: 33px; font-weight: 600; line-height: 70px; }
h2 { display: flex; margin: 115px 0 0; color: #999; font-size: 37px; font-weight: 600; line-height: 52px; }
.notice { display: flex; gap: 12px; height: 118px; margin-top: 19px; padding: 20px 0 0 21px; border: 3px solid #ffe9c0; border-radius: 9px; background: #fffdf9; color: #b9b9b9; font-size: 29px; line-height: 38px; }
.notice svg { color: #ffdf9f; }
.stick { height: 70px; margin-top: 23px; }

/* dialog */
.modal-shadow { position: absolute; left: 627px; top: 228px; width: 2587px; height: 1282px; border-radius: 11px; box-shadow: 0 0 50px rgba(0, 0, 0, 0.14); }
.modal { position: absolute; left: 627px; top: 228px; display: flex; flex-direction: column; width: 2587px; height: 1282px; overflow: hidden; border: 2px solid #dcdcdc; border-radius: 11px; background: #fff; }
.modal-head { display: flex; justify-content: space-between; align-items: center; height: 127px; flex: none; padding: 0 47px 1px 33px; border-bottom: 2px solid #dcdcdc; }
.title { padding-top: 4px; color: #000; font-size: 36px; font-weight: 600; }
.modal-body { display: flex; flex: 1; min-height: 0; }
.side { width: 517px; flex: none; margin: 0; padding: 29px 0 0 55px; border-right: 2px solid #dcdcdc; list-style: none; font-size: 33px; font-weight: 600; line-height: 84.500px; }
.side li { height: 84.500px; }
.content { width: 2044px; flex: none; padding: 42px 0 0 33px; overflow: hidden; color: #000; }
.tag { display: table; height: 43px; padding: 0 12px 0 11px; border-radius: 6px; background: #f2f2f2; font-size: 22px; font-weight: 600; line-height: 43px; }
.next-tag { width: 111px; }
.texts { display: flex; align-items: center; gap: 65px; height: 76px; margin-top: 15px; padding: 0 0 4px 1px; font-size: 36px; line-height: 70px; }
.large { font-size: 50px; }
.small { font-size: 34px; }
.very { font-size: 28px; }
.quote { font-size: 45px; }
.over { font-size: 27px; font-weight: 900; }
.tiny { font-size: 26px; }
.with-icon { display: flex; align-items: center; gap: 6px; }
.second { margin: 2px 0 107px; }
.btn-rows { display: flex; flex-direction: column; gap: 19px; margin: 23px 0 118px; }
.btn-row { display: flex; gap: 20px; }
.btn { display: flex; align-items: center; gap: 22px; height: 85px; padding: 0 34px 8px; border: 4px solid transparent; border-radius: 43px; font-size: 31px; font-weight: 800; }
.btn svg { margin-top: 9px; }
.blue { background: #5aa4c7; border-color: #5aa4c7; color: #faf9ff; }
.pink { background: #d7a4a9; border-color: #d7a4a9; color: #4f4f51; }
.teal { background: #86b4b7; border-color: #86b4b7; color: #4f4f51; }
.blue-line { border-color: #5aa4c7; color: #5aa4c7; }
.pink-line { border-color: #d7a4a9; color: #d7a4a9; }
.teal-line { border-color: #86b4b7; color: #86b4b7; }
.plain { padding: 0 30px 11px; }
.plain svg { margin-top: 8px; }
.blue-plain { color: #5aa4c7; }
.pink-plain { color: #d7a4a9; }
.icon-row { display: flex; gap: 44.500px; height: 41px; margin: 22px 0 46px; color: #5aa4c7; }
.icon-cell { display: flex; justify-content: center; min-width: 41px; }
.tile-row { display: flex; align-items: center; gap: 45px; margin-bottom: 144px; }
.tile { display: flex; align-items: center; justify-content: center; }
.round { width: 112.500px; height: 112px; border-radius: 50%; }
.square { width: 78.500px; height: 78px; border-radius: 21px; }
.blue-tile { background: #5aa4c7; color: #faf9ff; }
.dark-tile { background: #4f4f51; color: #faf9ff; }
.pale-tile { background: #faf9ff; color: #4f4f51; }
.library { width: 318px; height: 72px; padding-left: 27px; border-radius: 8px; background: #059c90; color: #fff; font-size: 32px; font-weight: 600; line-height: 73px; }
.modal-scroll { width: 22px; background: #dcdcdc; }
.modal-scroll i { height: 521px; background: #cdcdcd; box-shadow: inset 0 0 0 2px #bfbfbf; }
</style>
